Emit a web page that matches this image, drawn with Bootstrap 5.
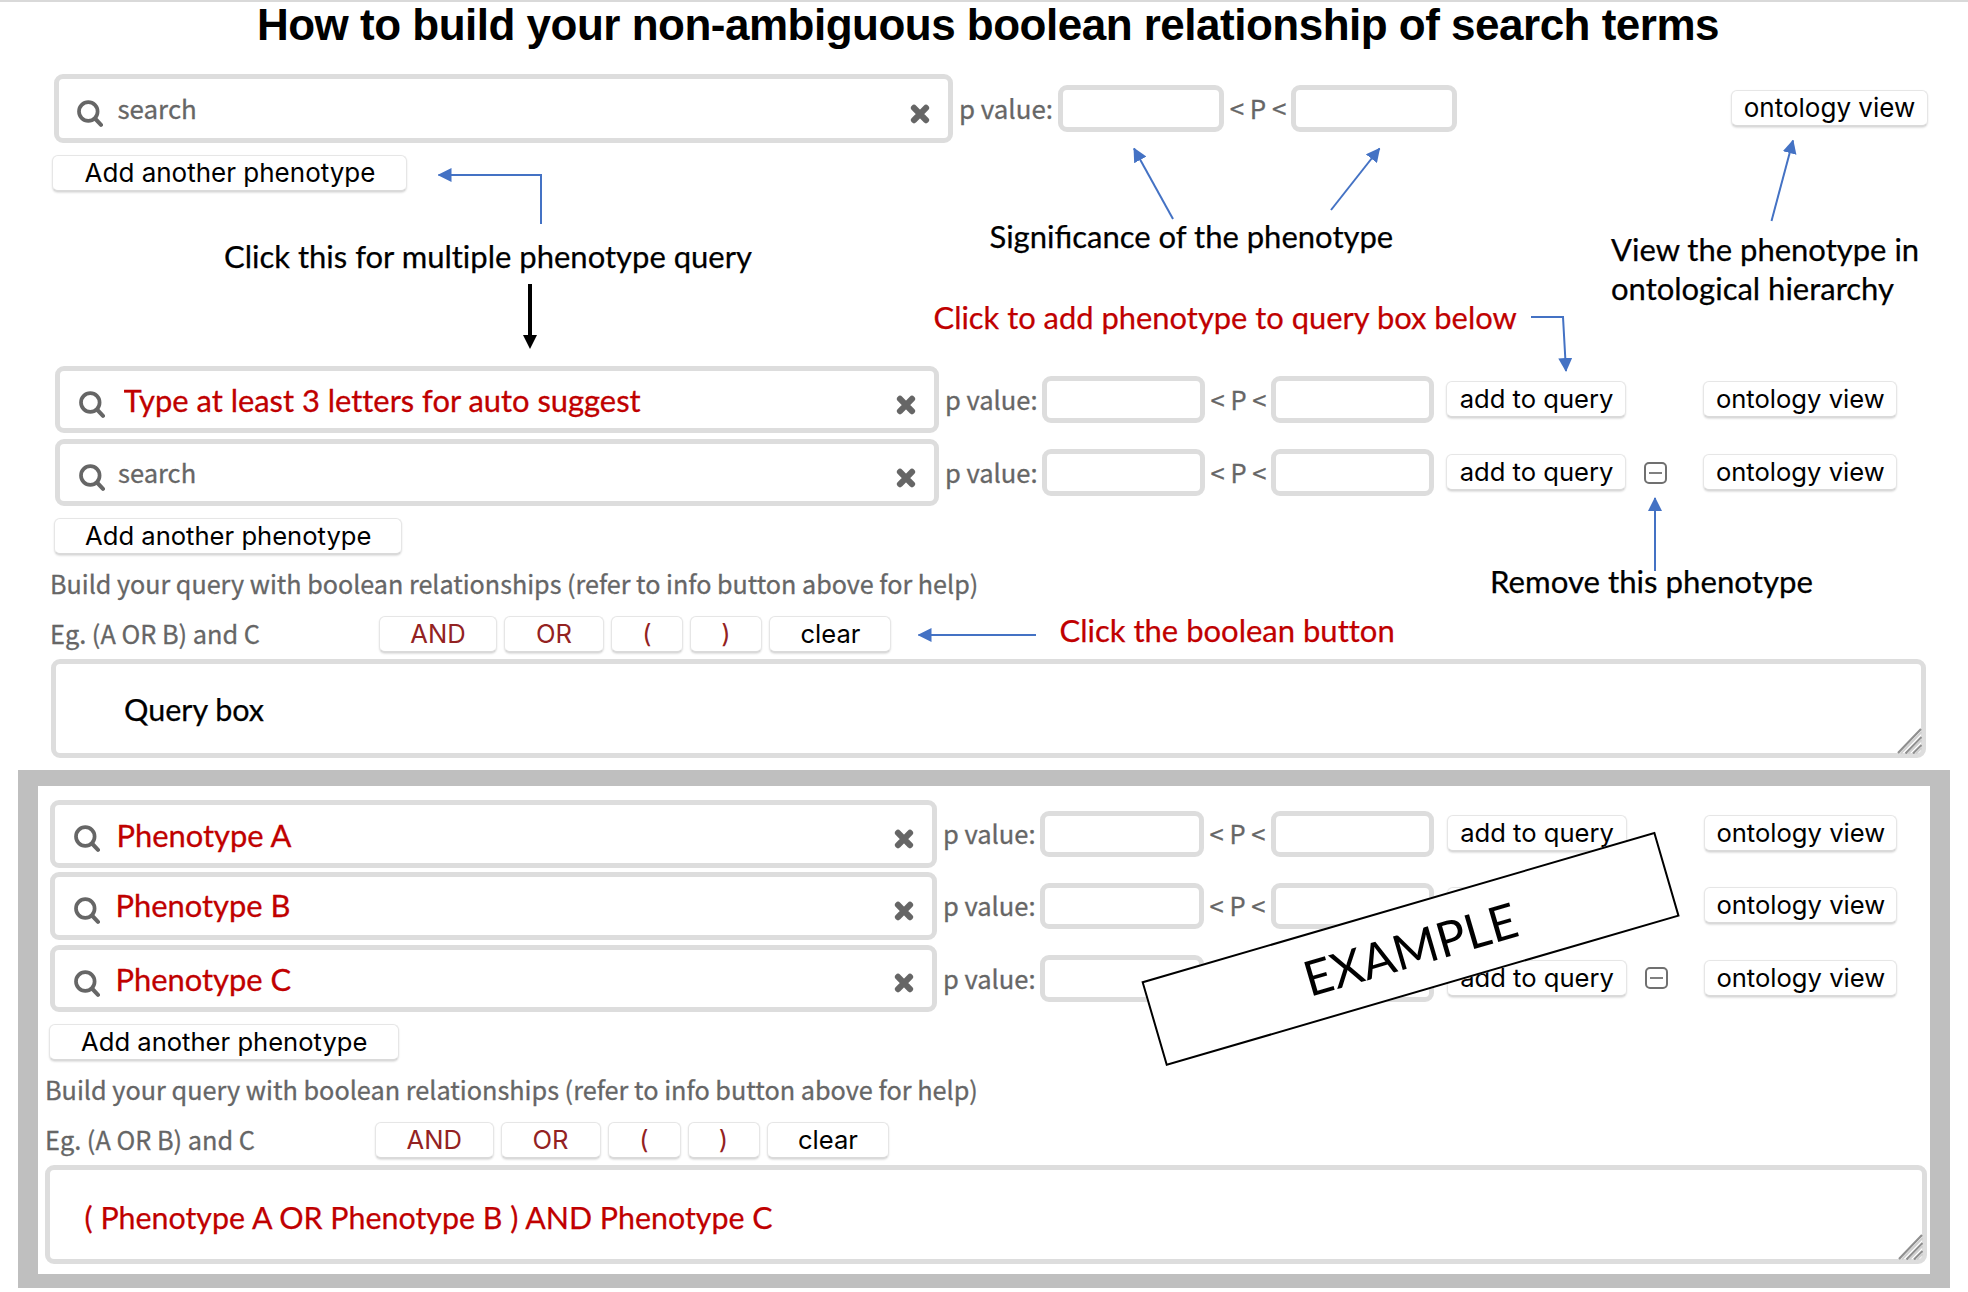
<!DOCTYPE html>
<html lang="en">
<head>
<meta charset="utf-8">
<title>How to build your non-ambiguous boolean relationship of search terms</title>
<link href="https://cdn.jsdelivr.net/npm/bootstrap@5.3.0/dist/css/bootstrap.min.css" rel="stylesheet">
<style>
  body { width: 1968px; height: 1292px; overflow: hidden; background: #fff; color: #000; font-family: "Noto Sans CJK SC", "Open Sans", sans-serif; }
  .guide { border-top: 2px solid #d9d9d9; height: 1292px; }
  .guide-title { height: 72px; padding: 5px 0 0 8px; font: bold 44px/36px "Liberation Sans", Arial, sans-serif; letter-spacing: -.5px; white-space: nowrap; }
  .step-one { --box: 899px; --label: 105.5px; --num: 166px; --gap: 67px; padding-left: 53.5px; height: 292px; --row: 69px; --fs: 25.9px; }
  .step-two { --box: 883.5px; --label: 103.5px; --num: 163px; --gap: 66px; padding-left: 55px; height: 404px; --row: 67px; --fs: 25.5px; }
  .example { --box: 886.5px; --label: 103.5px; --num: 163.5px; --gap: 67px; --row: 67.5px; --fs: 25.5px; margin: 0 18px; height: 518px; border: solid #bfbfbf; border-width: 16px 20px 14px; padding: 14px 0 0 12px; }
  .term-row { height: var(--row); color: #666; font-size: var(--fs); line-height: 1; }
  .term-box { width: var(--box); height: var(--row); border: 5px solid #ddd; border-radius: 9px; padding: 0 18px 0 18.5px; }
  .term-box input { border: 0; outline: 0; background: none; height: 40px; padding: 0 0 2px; margin-left: 14.5px; color: #666; min-width: 0; font-size: var(--fs); }
  .term-box input::placeholder { color: #666; opacity: 1; }
  .term-box input, .p-label, .p-gap, .hint, .eg { -webkit-text-stroke: .3px currentColor; }
  .term-box input.note-value { font: 30.9px "Lato", sans-serif; color: #c00000; }
  .term-box svg { margin-top: 10px; flex: none; }
  .p-label { width: var(--label); padding: 0 0 2px 6.5px; white-space: nowrap; }
  .p-gap { width: var(--gap); padding: 0 0 2px 1px; text-align: center; white-space: nowrap; }
  .p-num.form-control { width: var(--num); height: 46.5px; border: 5px solid #ddd; border-radius: 9px; padding: 0; }
  .soft-btn.btn { height: 37px; padding: 0 0 0 1px; border: 1px solid #e6e6e6; border-bottom: 2px solid #dadada; border-radius: 6px; background: #fff; box-shadow: 0 1px 2px rgba(0,0,0,.12); font: 25.6px/34px "Inter", "Roboto", sans-serif; color: #000; white-space: nowrap; }
  .soft-btn.op { color: #932222; padding: 0; }
  .w-add { width: 180px; }
  .w-onto { width: 193.5px; }
  .minus-slot { width: 77px; padding-left: 18px; }
  .hint { color: #666; font-size: 25.13px; line-height: 30px; height: 30px; white-space: nowrap; }
  .eg { color: #666; font-size: 25.3px; line-height: 32px; padding-bottom: 4px; white-space: nowrap; }
  .bool-row { height: 37px; }
  .query-box { position: relative; width: 1875px; height: 99px; border: 5px solid #ddd; border-radius: 9px; font: 30.5px/1 "Lato", sans-serif; }
  .query-box svg { position: absolute; right: -1px; bottom: -1px; }
  .callout { position: absolute; font: 31px/39.8px "Lato", sans-serif; white-space: nowrap; -webkit-text-stroke: .25px currentColor; }
  .note-value, .query-box { -webkit-text-stroke: .25px currentColor; }
  .term-box input.note-value, .query-box, .callout { font-variant-ligatures: none; }
  .callout.with-fi { font-variant-ligatures: normal; }
  .arrows { position: absolute; left: 0; top: 0; }
  .red { color: #c00000; }
  .stamp { position: absolute; left: 1143.3px; top: 905.2px; width: 534.5px; height: 87.5px; border: 2px solid #000; background: #fff; transform: rotate(-16.25deg); font: 48.7px/1 "Lato", sans-serif; }
</style>
</head>
<body>
<svg width="0" height="0" class="position-absolute">
  <symbol id="lens" viewBox="0 0 26 27"><circle cx="11.3" cy="11.5" r="9.3" fill="none" stroke="#666" stroke-width="3.7"/><path d="M18 18.5L24 24.8" stroke="#666" stroke-width="4" stroke-linecap="round"/></symbol>
  <symbol id="cross" viewBox="0 0 20 20"><path d="M4 3.9L16 16.1M16 3.9L4 16.1" stroke="#666" stroke-width="6.2" stroke-linecap="round"/></symbol>
  <symbol id="minus" viewBox="0 0 23 22"><rect x="1" y="1" width="21" height="20" rx="4" fill="#fff" stroke="#707070" stroke-width="2"/><path d="M5 11H18" stroke="#808080" stroke-width="2"/></symbol>
  <symbol id="grip" viewBox="0 0 26 26"><path d="M2 25L25 1M9.5 25.5L25.5 9M17 25.5L25.5 17" stroke="#8f8f8f" stroke-width="2.2"/><path d="M4.8 25.5L25.5 4M12.3 25.5L25.5 12M19.8 25.5L25.5 20" stroke="#d0d0d0" stroke-width="2"/></symbol>
</svg>

<main class="guide position-relative">
  <h1 class="guide-title text-center m-0">How to build your non-ambiguous boolean relationship of search terms</h1>

  <section class="step-one">
    <div class="term-row d-flex align-items-center">
      <div class="term-box d-flex align-items-center">
        <svg width="26" height="27"><use href="#lens"/></svg>
        <input class="flex-grow-1" placeholder="search">
        <svg width="20" height="20"><use href="#cross"/></svg>
      </div>
      <span class="p-label">p value:</span><input class="p-num form-control"><span class="p-gap">&lt; P &lt;</span><input class="p-num form-control">
      <button class="btn soft-btn" style="margin-left:273.5px;width:197px;font-size:26px">ontology view</button>
    </div>
    <button class="btn soft-btn d-block" style="margin:12px 0 0 -1.5px;width:355px;font-size:26px">Add another phenotype</button>
  </section>

  <section class="step-two">
    <div class="term-row d-flex align-items-center">
      <div class="term-box d-flex align-items-center">
        <svg width="26" height="27"><use href="#lens"/></svg>
        <input class="note-value flex-grow-1" style="margin-left:19px;padding-top:4px" value="Type at least 3 letters for auto suggest">
        <svg width="20" height="20"><use href="#cross"/></svg>
      </div>
      <span class="p-label">p value:</span><input class="p-num form-control"><span class="p-gap">&lt; P &lt;</span><input class="p-num form-control">
      <button class="btn soft-btn w-add" style="margin-left:12px">add to query</button>
      <span class="minus-slot"></span>
      <button class="btn soft-btn w-onto">ontology view</button>
    </div>
    <div class="term-row d-flex align-items-center" style="margin-top:6px">
      <div class="term-box d-flex align-items-center">
        <svg width="26" height="27"><use href="#lens"/></svg>
        <input class="flex-grow-1" style="margin-left:13.5px" placeholder="search">
        <svg width="20" height="20"><use href="#cross"/></svg>
      </div>
      <span class="p-label">p value:</span><input class="p-num form-control"><span class="p-gap">&lt; P &lt;</span><input class="p-num form-control">
      <button class="btn soft-btn w-add" style="margin-left:12px">add to query</button>
      <span class="minus-slot d-flex"><svg width="23" height="22"><use href="#minus"/></svg></span>
      <button class="btn soft-btn w-onto">ontology view</button>
    </div>
    <button class="btn soft-btn d-block" style="margin:12px 0 0 -1.5px;width:348.5px">Add another phenotype</button>
    <div class="hint" style="margin:13px 0 0 -5px">Build your query with boolean relationships (refer to info button above for help)</div>
    <div class="bool-row d-flex align-items-center" style="margin:18px 0 0 -5px">
      <span class="eg" style="width:329px">Eg. (A OR B) and C</span>
      <div class="d-flex" style="gap:7px">
        <button class="btn soft-btn op" style="width:118px">AND</button>
        <button class="btn soft-btn op" style="width:100px">OR</button>
        <button class="btn soft-btn op" style="width:72px">(</button>
        <button class="btn soft-btn op" style="width:72px">)</button>
        <button class="btn soft-btn" style="width:122px">clear</button>
      </div>
    </div>
    <div class="query-box d-flex align-items-center" style="margin:6px 0 0 -4.5px;padding:2px 0 0 68.5px">Query box
      <svg width="26" height="26"><use href="#grip"/></svg></div>
  </section>

  <section class="example">
    <div class="term-row d-flex align-items-center">
      <div class="term-box d-flex align-items-center">
        <svg width="26" height="27"><use href="#lens"/></svg>
        <input class="note-value flex-grow-1" style="margin-left:17px;padding-top:6px" value="Phenotype A">
        <svg width="20" height="20"><use href="#cross"/></svg>
      </div>
      <span class="p-label">p value:</span><input class="p-num form-control"><span class="p-gap">&lt; P &lt;</span><input class="p-num form-control">
      <button class="btn soft-btn w-add" style="margin-left:12.5px">add to query</button>
      <span class="minus-slot"></span>
      <button class="btn soft-btn w-onto">ontology view</button>
    </div>
    <div class="term-row d-flex align-items-center" style="margin-top:4.5px">
      <div class="term-box d-flex align-items-center">
        <svg width="26" height="27"><use href="#lens"/></svg>
        <input class="note-value flex-grow-1" style="margin-left:16px;padding-bottom:1px" value="Phenotype B">
        <svg width="20" height="20"><use href="#cross"/></svg>
      </div>
      <span class="p-label">p value:</span><input class="p-num form-control"><span class="p-gap">&lt; P &lt;</span><input class="p-num form-control">
      <button class="btn soft-btn w-add" style="margin-left:12.5px">add to query</button>
      <span class="minus-slot"></span>
      <button class="btn soft-btn w-onto">ontology view</button>
    </div>
    <div class="term-row d-flex align-items-center" style="margin-top:5px">
      <div class="term-box d-flex align-items-center">
        <svg width="26" height="27"><use href="#lens"/></svg>
        <input class="note-value flex-grow-1" style="margin-left:16px;padding-top:4px" value="Phenotype C">
        <svg width="20" height="20"><use href="#cross"/></svg>
      </div>
      <span class="p-label">p value:</span><input class="p-num form-control"><span class="p-gap">&lt; P &lt;</span><input class="p-num form-control">
      <button class="btn soft-btn w-add" style="margin-left:12.5px">add to query</button>
      <span class="minus-slot d-flex"><svg width="23" height="22"><use href="#minus"/></svg></span>
      <button class="btn soft-btn w-onto">ontology view</button>
    </div>
    <button class="btn soft-btn d-block" style="margin:12px 0 0 -1.5px;width:350.5px">Add another phenotype</button>
    <div class="hint" style="margin:13px 0 0 -5px;font-size:25.25px">Build your query with boolean relationships (refer to info button above for help)</div>
    <div class="bool-row d-flex align-items-center" style="margin:18px 0 0 -5px">
      <span class="eg" style="width:330px">Eg. (A OR B) and C</span>
      <div class="d-flex" style="gap:7px">
        <button class="btn soft-btn op" style="width:118.5px">AND</button>
        <button class="btn soft-btn op" style="width:100px">OR</button>
        <button class="btn soft-btn op" style="width:73px">(</button>
        <button class="btn soft-btn op" style="width:72px">)</button>
        <button class="btn soft-btn" style="width:122px">clear</button>
      </div>
    </div>
    <div class="query-box red d-flex align-items-center" style="margin:6px 0 0 -5px;padding:6px 0 0 34.5px;width:1882px;font-size:30.4px">( Phenotype A OR Phenotype B ) AND Phenotype C
      <svg width="26" height="26"><use href="#grip"/></svg></div>
  </section>
</main>

<div class="callout" style="left:224px;top:237px">Click this for multiple phenotype query</div>
<div class="callout with-fi" style="left:989.5px;top:217px">Significance of the phenotype</div>
<div class="callout" style="left:1611px;top:229.5px">View the phenotype in<br>ontological hierarchy</div>
<div class="callout red" style="left:933.5px;top:297.5px;font-size:30.9px">Click to add phenotype to query box below</div>
<div class="callout" style="left:1490px;top:562px;font-size:31.2px">Remove this phenotype</div>
<div class="callout red" style="left:1059.5px;top:610.5px">Click the boolean button</div>
<div class="stamp d-flex align-items-center justify-content-center">EXAMPLE</div>

<svg class="arrows" width="1968" height="1292" fill="none" stroke-width="2" stroke="#4472c4" pointer-events="none">
  <defs>
    <marker id="tip" markerUnits="userSpaceOnUse" markerWidth="14" markerHeight="14" refX="13" refY="7" orient="auto"><path d="M0 0L14 7L0 14Z" fill="#4472c4" stroke="none"/></marker>
    <marker id="tip-dark" markerUnits="userSpaceOnUse" markerWidth="14" markerHeight="14" refX="13" refY="7" orient="auto"><path d="M0 0L14 7L0 14Z" fill="#000" stroke="none"/></marker>
  </defs>
  <path d="M541 224V175H438.5" marker-end="url(#tip)"/>
  <path d="M530 284V336" stroke="#000" stroke-width="4"/><path d="M530 330V348" stroke="#000" stroke-width=".1" marker-end="url(#tip-dark)"/>
  <path d="M1173 219L1134 148.5" marker-end="url(#tip)"/>
  <path d="M1331 210L1379.5 148.5" marker-end="url(#tip)"/>
  <path d="M1771.5 221L1793 140.5" marker-end="url(#tip)"/>
  <path d="M1531 317H1563L1566 371" marker-end="url(#tip)"/>
  <path d="M1655 571V498" marker-end="url(#tip)"/>
  <path d="M1036 635H918.5" marker-end="url(#tip)"/>
</svg>
<script src="https://cdn.jsdelivr.net/npm/bootstrap@5.3.0/dist/js/bootstrap.bundle.min.js"></script>
</body>
</html>
